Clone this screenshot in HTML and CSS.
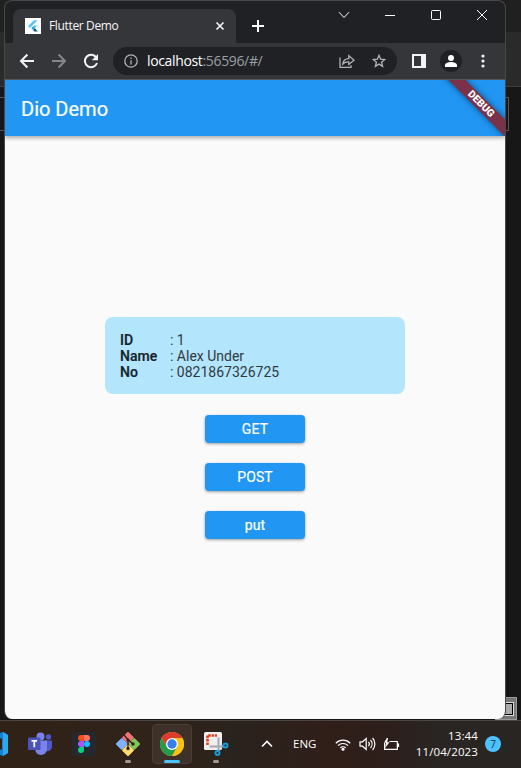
FILE: index.html
```html
<!DOCTYPE html>
<html lang="en">
<head>
<meta charset="utf-8">
<title>Flutter Demo</title>
<link rel="stylesheet" href="styles.css">
</head>
<body>
<div class="desktop">
  <div class="behind-outline"></div>
  <div class="behind-button"><span></span></div>
  <main class="window">
    <header class="titlebar">
      <div class="tab">
        <svg class="favicon" viewBox="0 0 16 16"><path fill="#fff" d="M0 0h16v16H0z"/><path fill="#54c5f8" d="M3 8.2 9 2.2h3.6L4.8 10zM6.4 10.2 9.2 7.4h3.4l-2.9 2.8z"/><path fill="#29a5e8" d="m6.4 10.2 1.7-1.7 1.8 1.7-1.8 1.8z"/><path fill="#01579b" d="m8.1 12 1.8-1.7 2.9 3.2H9.4z"/></svg>
        <span class="tab-title">Flutter Demo</span>
        <svg class="tab-close" viewBox="0 0 10 10"><path d="m1.5 1.5 7 7m0-7-7 7" stroke="#f1f3f4" stroke-width="1.7"/></svg>
      </div>
      <svg class="new-tab" viewBox="0 0 12 12"><path d="M6 0v12M0 6h12" stroke="#fff" stroke-width="2"/></svg>
      <div class="controls">
        <svg viewBox="0 0 12 12"><path d="m1 3.2 5 5.3 5-5.3"/></svg>
        <svg viewBox="0 0 12 12"><path d="M1 6.5h10"/></svg>
        <svg viewBox="0 0 12 12"><rect x="1.5" y="1.5" width="9" height="9" rx="1"/></svg>
        <svg viewBox="0 0 12 12"><path d="m1 1 10 10M11 1 1 11"/></svg>
      </div>
    </header>
    <nav class="toolbar">
      <svg class="nav-icon" viewBox="0 0 16 16"><path d="M15 8H2m6.4-6.5L2 8l6.4 6.5"/></svg>
      <svg class="nav-icon dim" viewBox="0 0 16 16"><path d="M1 8h13M7.6 1.5 14 8l-6.4 6.5"/></svg>
      <svg class="nav-icon" viewBox="0 0 16 16"><path d="M13.2 4.4A6.2 6.2 0 1 0 14 10"/><path d="M15 1v6.2H8.8z" fill="#f1f3f4" stroke="none"/></svg>
      <div class="omnibox">
        <svg class="info" viewBox="0 0 14 14"><circle cx="7" cy="7" r="6.2"/><path d="M7 6.2v4.3M7 3.4v1.5"/></svg>
        <span class="url"><b>localhost</b>:56596/#/</span>
        <svg class="share" viewBox="0 0 16 14"><path d="M1 3.500v9.900h11v-2.200M3.800 10c.5-3.600 2.600-5.200 6-5.300V1.600L15 6.200l-5.200 4.200V7.800c-2.800-.1-4.600.6-6 2.200z"/></svg>
        <svg class="star" viewBox="0 0 14 14"><path d="m7 1.300 1.600 3.900 4.200.3-3.200 2.700 1 4.100L7 10.100l-3.600 2.200 1-4.100-3.200-2.700 4.200-.3z"/></svg>
      </div>
      <svg class="panel" viewBox="0 0 14 14"><path fill="#f1f3f4" fill-rule="evenodd" d="M0 0h14v14H0zM2 2v10h7V2z"/></svg>
      <svg class="avatar" viewBox="0 0 22 22"><circle cx="11" cy="11" r="11" fill="#202124"/><circle cx="11" cy="8" r="3" fill="#fff"/><path fill="#fff" d="M5 17v-1.700c0-2.200 3.500-3.300 6-3.300s6 1.100 6 3.300V17z"/></svg>
      <svg class="dots" viewBox="0 0 4 14"><g fill="#f1f3f4"><circle cx="2" cy="2" r="1.600"/><circle cx="2" cy="7" r="1.600"/><circle cx="2" cy="12" r="1.600"/></g></svg>
    </nav>
    <section class="app">
      <div class="appbar"><h1>Dio Demo</h1></div>
      <div class="debug-clip"><div class="debug">DEBUG</div></div>
      <div class="content">
        <dl class="card">
          <dt>ID</dt><dd>: 1</dd>
          <dt>Name</dt><dd>: Alex Under</dd>
          <dt>No</dt><dd>: 0821867326725</dd>
        </dl>
        <button>GET</button>
        <button>POST</button>
        <button>put</button>
      </div>
    </section>
  </main>
  <footer class="taskbar">
    <div class="apps">
      <svg class="vscode" viewBox="0 0 8 24"><path fill="#1682cc" d="M0 1 3 0l5 3v18l-5 3-3-1v-5l2-1V7L0 6z"/><path fill="#2aa9f0" d="m3 0 5 3v18l-5 3z"/></svg>
      <svg class="app-icon teams" viewBox="0 0 24 24"><circle cx="20.500" cy="5" r="2.700" fill="#5059c9"/><path fill="#5059c9" d="M17 8.500h7V15a4.500 4.500 0 0 1-6 4z"/><circle cx="12.500" cy="4.500" r="4" fill="#7b83eb"/><path fill="#7b83eb" d="M7 8.500h12V17a6 6 0 0 1-12 0z"/><rect y="5.500" width="12.500" height="12.500" rx="1" fill="#4b53bc"/><path d="M3.500 8.900h5.600M6.300 9v6.200" stroke="#fff" stroke-width="1.700"/></svg>
      <svg class="app-icon" viewBox="0 0 24 24"><rect width="24" height="24" rx="2" fill="#25282c"/><path fill="#f24e1e" d="M12 3H9a3 3 0 0 0 0 6h3z"/><path fill="#ff7262" d="M12 3h3a3 3 0 0 1 0 6h-3z"/><path fill="#a259ff" d="M12 9H9a3 3 0 0 0 0 6h3z"/><circle cx="15" cy="12" r="3" fill="#1abcfe"/><path fill="#0acf83" d="M12 15H9a3 3 0 1 0 3 3z"/></svg>
      <div class="slot running"><svg class="app-icon" viewBox="0 0 24 24"><g stroke-width="2" stroke-linejoin="round"><path fill="#f07575" stroke="#f07575" d="m12 1 4.800 4.800L12 10.500 7.200 5.800z"/><path fill="#80b3ff" stroke="#80b3ff" d="M5.800 7.200 10.500 12l-4.700 4.800L1 12z"/><path fill="#7fc95b" stroke="#7fc95b" d="M18.200 7.200 23 12l-4.800 4.800-4.700-4.800z"/><path fill="#ffdc70" stroke="#ffdc70" d="m12 13.500 4.800 4.700L12 23l-4.800-4.800z"/></g><path d="m8 3 4 4.500V17m0-9.500 5 4.500" stroke="#302018" stroke-width="1.300" fill="none"/><g fill="#302018"><circle cx="12" cy="8" r="1.600"/><circle cx="12" cy="16.500" r="1.700"/><circle cx="17" cy="12" r="1.700"/></g></svg></div>
      <div class="slot active"><svg class="app-icon" viewBox="0 0 24 24"><circle cx="12" cy="12" r="12" fill="#fbc116"/><path fill="#dd3b2e" d="M1.600 6a12 12 0 0 1 20.800 0H12l-5.200 9z"/><path fill="#249a4a" d="M1.600 6a12 12 0 0 0 10.400 18l5.200-9H6.800z"/><path fill="#fbc116" d="M22.400 6A12 12 0 0 1 12 24l5.200-9L12 6z"/><circle cx="12" cy="12" r="6" fill="#fff"/><circle cx="12" cy="12" r="4.700" fill="#367ff0"/></svg></div>
      <div class="slot running snip"><svg viewBox="0 0 26 24"><rect width="18" height="18" rx="1.500" fill="#f0f0f3"/><path d="M3.500 13V3.500H13" fill="none" stroke="#d9431c" stroke-width="2.600" stroke-dasharray="2.600 .8"/><path d="M14.500 5.500V19" stroke="#a9aeb6" stroke-width="2.200"/><path d="M5.500 14.500H20" stroke="#a9aeb6" stroke-width="2.200"/><g fill="none" stroke="#159cda" stroke-width="2"><circle cx="21.500" cy="13.500" r="2"/><circle cx="13.500" cy="21" r="2"/></g></svg></div>
    </div>
    <div class="tray">
      <svg class="chevron" viewBox="0 0 12 8"><path d="m1 6.500 5-5 5 5"/></svg>
      <span class="lang">ENG</span>
      <svg class="wifi" viewBox="0 0 16 13"><path d="M.8 5.200a10.200 10.200 0 0 1 14.400 0M3 7.600a7 7 0 0 1 10 0M5.200 9.900a4 4 0 0 1 5.600 0"/><circle cx="8" cy="11.300" r="1.500" fill="#fff" stroke="none"/></svg>
      <svg class="sound" viewBox="0 0 17 14"><path d="M1 4.800h2.500L7.200 1.500v11L3.500 9.200H1zM9.500 4.800a3.500 3.500 0 0 1 0 4.400M11.500 3a6 6 0 0 1 0 8M13.600 1a9 9 0 0 1 0 12"/></svg>
      <svg class="battery" viewBox="0 0 17 13"><path d="M6.500 3.500h7.800v7.800H1.600V5M15.500 5.500v3.600"/><path fill="#fff" stroke="none" d="M3.800 0 1 4.800h2.200L2 10l4.500-5.800H4.200L5 0z"/></svg>
      <div class="clock"><span>13:44</span><span>11/04/2023</span></div>
      <span class="badge">7</span>
    </div>
  </footer>
</div>
</body>
</html>
```
FILE: styles.css
```css
* { box-sizing: border-box; }
body { margin: 0; font-family: Roboto, sans-serif; }
svg { display: block; flex: none; }
.desktop {
  position: relative;
  display: grid;
  grid-template-rows: 720px 48px;
  width: 521px;
  height: 768px;
  overflow: hidden;
  background: linear-gradient(#202020 0 32px, #2a2a2a 32px 86px, #3d3d3d 86px 87px, #171717 87px);
}
.behind-outline { position: absolute; left: -2px; top: 97px; width: 511px; height: 34px; border: 1px solid #555; }
.behind-button { position: absolute; left: 495px; top: 697px; width: 22px; height: 23px; padding: 5px 3px; background: #777; border: 1px solid #999; }
.behind-button span { display: block; height: 12px; border: 1px solid #000; outline: 1px solid #ddd; background: #aaa; }
.window {
  position: relative;
  display: flex;
  flex-direction: column;
  width: 502px;
  height: 719px;
  margin-left: 4px;
  border: 1px solid #464746;
  border-bottom: 0;
  border-radius: 8px;
  overflow: hidden;
  background: #202124;
}
.titlebar { display: flex; height: 42px; padding-left: 8px; }
.tab { display: flex; align-items: center; width: 223px; height: 34px; margin-top: 8px; padding: 0 11px 0 12px; border-radius: 8px 8px 0 0; background: #35363a; }
.favicon { width: 16px; height: 16px; }
.tab-title { flex: 1; margin-left: 8px; color: #f5f5f5; font: 12px/16px "Open Sans", sans-serif; letter-spacing: -.35px; }
.tab-close { width: 10px; height: 10px; }
.new-tab { width: 12px; height: 12px; margin: 19px 0 0 16px; }
.controls { display: flex; gap: 34px; margin: 8px 0 0 74px; }
.controls svg { width: 12px; height: 12px; fill: none; stroke: #fff; stroke-width: 1; }
.toolbar { display: flex; align-items: center; height: 37px; padding: 0 20px 1px 14px; background: #35363a; border-bottom: 1px solid #5a5b5e; }
.nav-icon { width: 16px; height: 16px; margin-right: 16px; fill: none; stroke: #f1f3f4; stroke-width: 2; }
.nav-icon.dim { stroke: #85868a; }
.omnibox { display: flex; align-items: center; width: 284px; height: 28px; margin-left: -2px; padding: 0 11px; border-radius: 14px; background: #202124; }
.omnibox svg { fill: none; stroke: #b0b3b8; stroke-width: 1.3; }
.info { width: 14px; height: 14px; }
.url { flex: 1; margin-left: 9px; color: #9aa0a6; font: 14px/20px "Open Sans", sans-serif; letter-spacing: -.35px; }
.url b { color: #fff; font-weight: 400; }
.share { width: 16px; height: 14px; margin-right: 17px; }
.star { width: 14px; height: 14px; }
.panel { width: 14px; height: 14px; margin-left: 15px; }
.avatar { width: 22px; height: 22px; margin-left: 14px; }
.dots { width: 4px; height: 14px; margin-left: 19px; }
.app { position: relative; flex: 1; display: flex; flex-direction: column; background: #fafafa; }
.appbar { display: flex; align-items: center; height: 56px; padding: 2px 0 0 16px; background: #2196f3; box-shadow: 0 2px 4px rgba(0,0,0,.32); }
.appbar h1 { margin: 0; color: #fff; font: 400 20px/24px Roboto, sans-serif; -webkit-text-stroke: .2px #fff; }
.debug-clip { position: absolute; top: 0; right: 0; width: 70px; height: 56px; overflow: hidden; }
.debug { position: absolute; left: -4px; top: 18px; width: 100px; height: 12px; color: #fff; background: #7b3148; box-shadow: 0 0 6px rgba(0,0,0,.5); font: 900 10.2px/12px Roboto, sans-serif; text-align: center; transform: rotate(45deg); }
.content { flex: 1; display: flex; flex-direction: column; align-items: center; padding-top: 181px; }
.card { display: grid; grid-template-columns: 50px 1fr; grid-auto-rows: 16px; width: 300px; height: 77px; margin: 0 0 20.5px; padding: 15px; border-radius: 8px; background: #b3e5fc; color: #303a3e; font-size: 14px; line-height: 16px; }
.card dt { color: #15222a; font-weight: 500; -webkit-text-stroke: .2px #15222a; }
.card dd { margin: 0; }
.content button { width: 100px; height: 28px; margin-bottom: 20px; padding: 0; border: 0; border-radius: 4px; background: #2196f3; box-shadow: 0 1px 3px rgba(0,0,0,.38); color: #fff; font: 400 14px/16px Roboto, sans-serif; letter-spacing: .12px; -webkit-text-stroke: .2px #fff; }
.taskbar { position: relative; display: flex; justify-content: space-between; padding-bottom: 1px; border-top: 1px solid #4a4744; background: linear-gradient(90deg, #302217, #30231a 32%, #2a231d 45%, #311e19 64%, #2d1f1b 74%, #292522 84%, #282522); }
.apps, .tray { display: flex; align-items: center; }
.vscode { width: 8px; height: 24px; }
.app-icon { width: 24px; height: 24px; }
.teams { margin: 0 20px; }
.slot { position: relative; display: flex; justify-content: center; align-items: center; width: 40px; height: 40px; border-radius: 4px; }
.slot:first-of-type { margin-left: 12px; }
.slot.active { margin: 0 4px; background: #3d3129; border: 1px solid #493e36; }
.slot::after { content: ""; position: absolute; left: 17px; bottom: 1px; width: 6px; height: 3px; border-radius: 2px; background: #a19b97; }
.slot.active::after { left: 11px; bottom: 0; width: 16px; background: #4cc2ff; }
.snip svg { width: 26px; height: 24px; margin-left: 2px; }
.tray { padding-right: 20px; color: #fff; font: 11px/16px "Open Sans", sans-serif; }
.tray svg { fill: none; stroke: #fff; stroke-width: 1.2; }
.tray .chevron { width: 12px; height: 8px; margin-right: 20px; stroke-width: 1.6; }
.lang { width: 24px; margin-right: 18px; font-size: 11.5px; letter-spacing: 0; }
.wifi { width: 16px; height: 13px; margin-right: 8px; }
.sound { width: 17px; height: 14px; margin-right: 7px; }
.battery { width: 17px; height: 13px; }
.clock { display: flex; flex-direction: column; align-items: flex-end; width: 78px; font-size: 11.5px; letter-spacing: .12px; }
.badge { width: 16px; height: 16px; margin-left: 7px; border-radius: 50%; background: #4cc2ff; color: #173447; font-size: 10px; text-align: center; }
```
